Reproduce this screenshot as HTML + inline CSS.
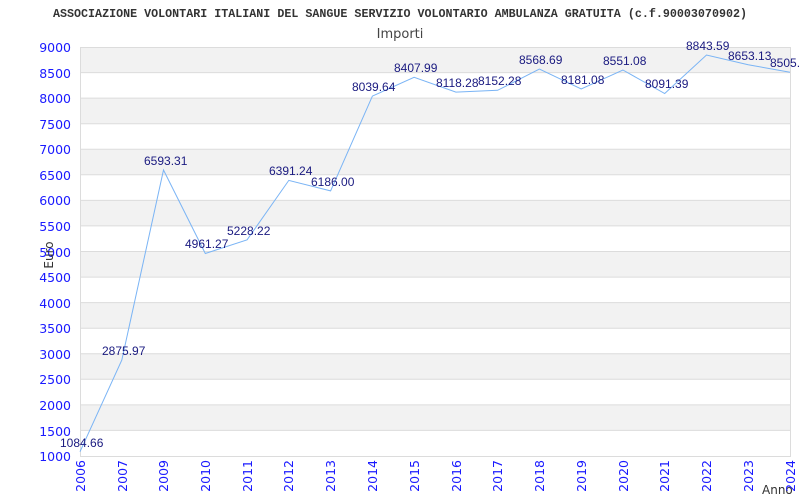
<!DOCTYPE html>
<html><head><meta charset="utf-8"><style>html,body{margin:0;padding:0;background:#fff}svg{display:block}</style></head><body>
<svg width="800" height="500" xmlns="http://www.w3.org/2000/svg">
<rect width="800" height="500" fill="#fff"/>
<g fill="#f2f2f2">
<rect x="80" y="47" width="710" height="25.56"/>
<rect x="80" y="98.1" width="710" height="25.56"/>
<rect x="80" y="149.3" width="710" height="25.56"/>
<rect x="80" y="200.4" width="710" height="25.56"/>
<rect x="80" y="251.5" width="710" height="25.56"/>
<rect x="80" y="302.6" width="710" height="25.56"/>
<rect x="80" y="353.8" width="710" height="25.56"/>
<rect x="80" y="404.9" width="710" height="25.56"/>
</g>
<g stroke="#dcdcdc" stroke-width="1">
<line x1="80" x2="790" y1="47.5" y2="47.5"/><line x1="80" x2="790" y1="72.6" y2="72.6"/><line x1="80" x2="790" y1="98.1" y2="98.1"/><line x1="80" x2="790" y1="123.7" y2="123.7"/><line x1="80" x2="790" y1="149.3" y2="149.3"/><line x1="80" x2="790" y1="174.8" y2="174.8"/><line x1="80" x2="790" y1="200.4" y2="200.4"/><line x1="80" x2="790" y1="225.9" y2="225.9"/><line x1="80" x2="790" y1="251.5" y2="251.5"/><line x1="80" x2="790" y1="277.1" y2="277.1"/><line x1="80" x2="790" y1="302.6" y2="302.6"/><line x1="80" x2="790" y1="328.2" y2="328.2"/><line x1="80" x2="790" y1="353.8" y2="353.8"/><line x1="80" x2="790" y1="379.3" y2="379.3"/><line x1="80" x2="790" y1="404.9" y2="404.9"/><line x1="80" x2="790" y1="430.4" y2="430.4"/><line x1="80" x2="790" y1="456.5" y2="456.5"/>
<line x1="80.5" x2="80.5" y1="47" y2="457"/><line x1="790.5" x2="790.5" y1="47" y2="457"/>
</g>
<text x="400" y="17" text-anchor="middle" textLength="694" lengthAdjust="spacingAndGlyphs" font-family="Liberation Mono, monospace" font-weight="bold" font-size="11.5" fill="#333">ASSOCIAZIONE VOLONTARI ITALIANI DEL SANGUE SERVIZIO VOLONTARIO AMBULANZA GRATUITA (c.f.90003070902)</text>
<text x="400" y="38" text-anchor="middle" font-family="DejaVu Sans, sans-serif" font-size="13" fill="#444">Importi</text>
<g font-family="DejaVu Sans, sans-serif" font-size="12.5" fill="#1a1aff" text-anchor="end">
<text x="71" y="52">9000</text><text x="71" y="78">8500</text><text x="71" y="103">8000</text><text x="71" y="129">7500</text><text x="71" y="154">7000</text><text x="71" y="180">6500</text><text x="71" y="205">6000</text><text x="71" y="231">5500</text><text x="71" y="257">5000</text><text x="71" y="282">4500</text><text x="71" y="308">4000</text><text x="71" y="333">3500</text><text x="71" y="359">3000</text><text x="71" y="384">2500</text><text x="71" y="410">2000</text><text x="71" y="436">1500</text><text x="71" y="461">1000</text>
</g>
<text transform="translate(53,255) rotate(-90)" text-anchor="middle" font-family="DejaVu Sans, sans-serif" font-size="12" fill="#333">Euro</text>
<text x="762" y="494" font-family="DejaVu Sans, sans-serif" font-size="12" fill="#333">Anno</text>
<g font-family="DejaVu Sans, sans-serif" font-size="12.5" fill="#1a1aff" text-anchor="end">
<text transform="translate(85,460) rotate(-90)">2006</text>
<text transform="translate(127,460) rotate(-90)">2007</text>
<text transform="translate(168,460) rotate(-90)">2009</text>
<text transform="translate(210,460) rotate(-90)">2010</text>
<text transform="translate(252,460) rotate(-90)">2011</text>
<text transform="translate(293,460) rotate(-90)">2012</text>
<text transform="translate(335,460) rotate(-90)">2013</text>
<text transform="translate(377,460) rotate(-90)">2014</text>
<text transform="translate(419,460) rotate(-90)">2015</text>
<text transform="translate(461,460) rotate(-90)">2016</text>
<text transform="translate(502,460) rotate(-90)">2017</text>
<text transform="translate(544,460) rotate(-90)">2018</text>
<text transform="translate(586,460) rotate(-90)">2019</text>
<text transform="translate(628,460) rotate(-90)">2020</text>
<text transform="translate(669,460) rotate(-90)">2021</text>
<text transform="translate(711,460) rotate(-90)">2022</text>
<text transform="translate(753,460) rotate(-90)">2023</text>
<text transform="translate(795,460) rotate(-90)">2024</text>
</g>
<polyline fill="none" stroke="#7ab4f5" stroke-width="1" points="80,451.7 121.8,360.1 163.5,170 205.3,253.5 247.1,239.8 288.8,180.4 330.6,190.9 372.4,96.1 414.1,77.3 455.9,92.1 497.6,90.3 539.4,69.1 581.2,88.9 622.9,70 664.7,93.5 706.5,55 748.2,64.7 790,72.3"/>
<g font-family="Liberation Sans, sans-serif" font-size="12" fill="#1a1a80">
<text x="60" y="447">1084.66</text>
<text x="102" y="355">2875.97</text>
<text x="144" y="165">6593.31</text>
<text x="185" y="248">4961.27</text>
<text x="227" y="235">5228.22</text>
<text x="269" y="175">6391.24</text>
<text x="311" y="186">6186.00</text>
<text x="352" y="91">8039.64</text>
<text x="394" y="72">8407.99</text>
<text x="436" y="87">8118.28</text>
<text x="478" y="85">8152.28</text>
<text x="519" y="64">8568.69</text>
<text x="561" y="84">8181.08</text>
<text x="603" y="65">8551.08</text>
<text x="645" y="88">8091.39</text>
<text x="686" y="50">8843.59</text>
<text x="728" y="60">8653.13</text>
<text x="770" y="67">8505.2</text>
</g>
</svg>
</body></html>
